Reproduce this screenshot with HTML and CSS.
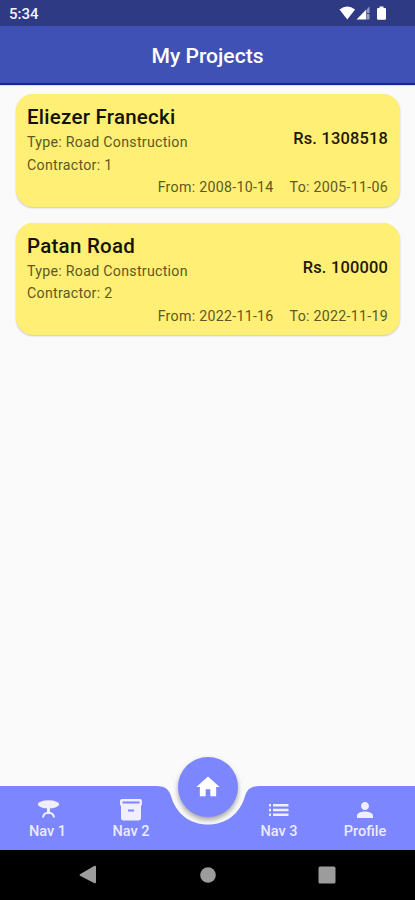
FILE: index.html
```html
<!DOCTYPE html>
<html lang="en">
<head>
<meta charset="utf-8">
<title>My Projects</title>
<link rel="stylesheet" href="styles.css">
</head>
<body>
<div class="screen">
  <div class="status">
    <span class="clock">5:34</span>
    <svg class="status-icons" width="48" height="16" viewBox="0 0 48 16">
      <path fill="#fff" d="M.5 3.600Q8.300-2.400 16.100 3.600L8.300 13.500Z"/>
      <path fill="#fff" d="M17.500 13.500L27.300 3.500V13.500Z"/>
      <path fill="#fff" opacity=".5" d="M28 3L30.500 .6V7H28ZM28 8H30.500V13.500H28Z"/>
      <path fill="#fff" d="M40.500 .5H44.500V2H46Q47 2 47 3.200V12.500Q47 13.700 46 13.700H39.200Q38 13.700 38 12.500V3.200Q38 2 39.200 2H40.500Z"/>
    </svg>
  </div>
  <header class="appbar"><h1>My Projects</h1></header>
  <main class="list">
    <article class="card">
      <div class="top">
        <div>
          <h2>Eliezer Franecki</h2>
          <p>Type: Road Construction</p>
          <p>Contractor: 1</p>
        </div>
        <strong>Rs. 1308518</strong>
      </div>
      <div class="dates"><span>From: 2008-10-14</span><span>To: 2005-11-06</span></div>
    </article>
    <article class="card">
      <div class="top">
        <div>
          <h2>Patan Road</h2>
          <p>Type: Road Construction</p>
          <p>Contractor: 2</p>
        </div>
        <strong>Rs. 100000</strong>
      </div>
      <div class="dates"><span>From: 2022-11-16</span><span>To: 2022-11-19</span></div>
    </article>
  </main>
  <nav class="nav">
    <svg class="nav-shape" width="415" height="64" viewBox="0 0 415 64">
      <path fill="#7b86ff" d="M0 0H156C166 0 169 4 171 10C176 28 190 38.500 208 38.500C226 38.500 240 28 245 10C247 4 250 0 260 0H415V64H0Z"/>
    </svg>
    <a class="item">
      <svg width="24" height="24" viewBox="0 0 24 24"><g fill="#f1efff"><ellipse cx="12.500" cy="6.300" rx="10.700" ry="4"/><path d="M11 9H14V15H11Z"/></g><path fill="none" stroke="#f1efff" stroke-width="2" d="M7 19.500Q7.500 15.500 11 15H14Q17.500 15.500 18 19.500"/></svg>
      <span>Nav 1</span>
    </a>
    <a class="item">
      <svg width="24" height="24" viewBox="0 0 24 24"><path fill="#f1efff" fill-rule="evenodd" d="M3 1H21Q23 1 23 3V6Q23 7.700 22 8V20.500Q22 22.500 19.500 22.500H4.500Q2 22.500 2 20.500V8Q1 7.700 1 6V3Q1 1 3 1ZM3.500 3.500V5.500H20.500V3.500ZM9 11.500V13.500H15V11.500Z"/></svg>
      <span>Nav 2</span>
    </a>
    <a class="fab">
      <svg width="28" height="28" viewBox="0 0 24 24"><path fill="#fff" d="M10 20v-6h4v6h5v-8h3L12 3 2 12h3v8z"/></svg>
    </a>
    <a class="item">
      <svg width="24" height="24" viewBox="0 0 24 24"><path fill="#f1efff" d="M2 6H4V8.500H2ZM6 6H21.500V8.500H6ZM2 10.700H4V13.200H2ZM6 10.700H21.500V13.200H6ZM2 15.500H4V18H2ZM6 15.500H21.500V18H6Z"/></svg>
      <span>Nav 3</span>
    </a>
    <a class="item">
      <svg width="26" height="26" viewBox="0 0 24 24"><path fill="#f1efff" d="M12 12c2.210 0 4-1.790 4-4s-1.790-4-4-4-4 1.790-4 4 1.790 4 4 4zm0 1.500c-2.670 0-8 1.340-8 4v2.500h16v-2.500c0-2.660-5.330-4-8-4z"/></svg>
      <span>Profile</span>
    </a>
  </nav>
  <div class="system">
    <svg width="18" height="20" viewBox="0 0 18 20"><path fill="#9c9c9c" d="M1 9.300L15.500 .8Q17 .3 17 1.800V17.200Q17 18.700 15.500 18.200L1 10.700Q0 10 1 9.300Z"/></svg>
    <svg width="18" height="20" viewBox="0 0 18 20"><circle cx="9" cy="10" r="7.800" fill="#9c9c9c"/></svg>
    <svg width="18" height="20" viewBox="0 0 18 20"><rect x=".5" y="1.500" width="17" height="17" rx="1.500" fill="#9c9c9c"/></svg>
  </div>
</div>
</body>
</html>
```
FILE: styles.css
```css
* { box-sizing: border-box; }
body { margin: 0; font-family: Roboto, "Liberation Sans", sans-serif; }
h1, h2, p { margin: 0; }
svg { display: block; flex: none; }

.screen {
  width: 415px;
  height: 900px;
  display: flex;
  flex-direction: column;
  background: #fafafa;
  overflow: hidden;
}

.status {
  height: 26px;
  flex: none;
  display: flex;
  justify-content: space-between;
  padding: 0 28px 0 9px;
  background: #2e3b84;
  color: #f4f4ff;
}
.clock { font-size: 15px; font-weight: 500; line-height: 28px; }
.status-icons { margin-top: 6px; }

.appbar {
  height: 59px;
  flex: none;
  background: #3f51b5;
  border-bottom: 2px solid #1424a0;
  text-align: center;
}
.appbar h1 {
  font-size: 21.100px;
  font-weight: 500;
  line-height: 60px;
  color: #fff;
}

.list {
  flex: 1;
  display: flex;
  flex-direction: column;
  gap: 16px;
  padding: 8px 15px 0 16px;
  border-top: 1px solid #d3dbff;
}
.card {
  height: 112.500px;
  padding: 10px 12px 0 11px;
  border-radius: 17px;
  background: #ffef74;
  box-shadow: 0 1px 2px rgba(0, 0, 0, .2);
  color: #5e5725;
}
.top { display: flex; justify-content: space-between; }
.card h2 {
  font-size: 20.500px;
  font-weight: 500;
  line-height: 27px;
  letter-spacing: .25px;
  color: #151304;
}
.card p, .dates { font-size: 14.200px; line-height: 22.500px; letter-spacing: .28px; }
.card strong {
  margin-top: 25px;
  font-size: 16.400px;
  font-weight: 500;
  line-height: 20px;
  letter-spacing: .2px;
  color: #1c1905;
}
.dates { display: flex; justify-content: flex-end; gap: 16px; }

.nav {
  position: relative;
  height: 64px;
  flex: none;
  display: grid;
  grid-template-columns: 95px 72px 82px 60px 106px;
}
.nav-shape { position: absolute; left: 0; top: 0; }
.item {
  position: relative;
  display: flex;
  flex-direction: column;
  align-items: center;
  padding-top: 12px;
  font-size: 14.500px;
  font-weight: 500;
  line-height: 20px;
  color: #ecebff;
}
.item svg { height: 24px; }
.item:last-child { padding-left: 6px; }
.fab {
  position: relative;
  width: 60px;
  height: 60px;
  margin: -29.500px 0 0 11px;
  display: flex;
  align-items: center;
  justify-content: center;
  border-radius: 50%;
  background: #7b86ff;
  box-shadow: 0 3px 5px rgba(0, 0, 0, .35);
}

.system {
  height: 50px;
  flex: none;
  display: flex;
  justify-content: space-between;
  align-items: center;
  padding: 0 79px;
  background: #000;
}
```
